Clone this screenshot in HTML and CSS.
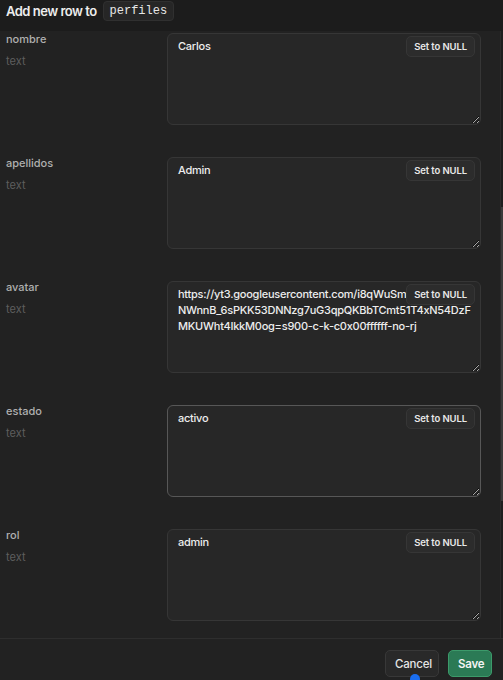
FILE: index.html
```html
<!DOCTYPE html>
<html lang="es">
<head>
<meta charset="utf-8">
<title>Add new row</title>
<link rel="stylesheet" href="styles.css">
</head>
<body>
<div class="panel">
  <header class="head">
    <span class="title">Add new row to</span>
    <code class="tbl">perfiles</code>
  </header>
  <main class="body">
    <div class="row">
      <div class="lab"><div class="name">nombre</div><div class="type">text</div></div>
      <div class="field"><textarea class="ta">Carlos</textarea><button class="null">Set to NULL</button></div>
    </div>
    <div class="row">
      <div class="lab"><div class="name">apellidos</div><div class="type">text</div></div>
      <div class="field"><textarea class="ta">Admin</textarea><button class="null">Set to NULL</button></div>
    </div>
    <div class="row">
      <div class="lab"><div class="name">avatar</div><div class="type">text</div></div>
      <div class="field"><textarea class="ta">https://yt3.googleusercontent.com/i8qWuSmo
NWnnB_6sPKK53DNNzg7uG3qpQKBbTCmt51T4xN54DzF
MKUWht4IkkM0og=s900-c-k-c0x00ffffff-no-rj</textarea><button class="null">Set to NULL</button></div>
    </div>
    <div class="row">
      <div class="lab"><div class="name">estado</div><div class="type">text</div></div>
      <div class="field"><textarea class="ta ta-hover">activo</textarea><button class="null">Set to NULL</button></div>
    </div>
    <div class="row">
      <div class="lab"><div class="name">rol</div><div class="type">text</div></div>
      <div class="field"><textarea class="ta">admin</textarea><button class="null">Set to NULL</button></div>
    </div>
  </main>
  <footer class="foot">
    <button class="btn cancel">Cancel</button>
    <button class="btn save">Save</button>
    <span class="dot"></span>
  </footer>
  <div class="sbar"><div class="thumb"></div></div>
</div>
</body>
</html>
```

FILE: styles.css
```css
* { box-sizing: border-box; }
html, body { margin: 0; padding: 0; }
body {
  background: #222222;
  font-family: "Inter", "Liberation Sans", sans-serif;
  color: #ededed;
  width: 503px;
  height: 680px;
  overflow: hidden;
}
.panel {
  position: relative;
  height: 680px;
  display: flex;
  flex-direction: column;
}
.head {
  height: 31px;
  background: #1c1c1c;
  display: flex;
  align-items: flex-start;
  gap: 6px;
  padding: 1px 6px 0;
}
.title {
  font-size: 13px;
  font-weight: 600;
  letter-spacing: -0.5px;
  line-height: 18px;
  padding-top: 1px;
}
.tbl {
  font-family: "Liberation Mono", monospace;
  font-size: 12px;
  color: #e6e6e6;
  background: #262626;
  border: 1px solid #303030;
  border-radius: 4px;
  padding: 1px 6px;
  line-height: 16px;
}
.body {
  height: 607px;
  padding-top: 2px;
  display: flex;
  flex-direction: column;
  gap: 32px;
}
.row {
  display: grid;
  grid-template-columns: 167px 314px;
}
.lab { padding: 0 0 0 6px; }
.name {
  font-size: 11px;
  font-weight: 500;
  color: #b0b0b0;
  line-height: 12px;
}
.type {
  font-size: 11px;
  color: #5e5e5e;
  margin-top: 9px;
  line-height: 14px;
}
.field { position: relative; }
.ta {
  display: block;
  width: 314px;
  height: 92px;
  margin: 0;
  background: #272727;
  border: 1px solid #363636;
  border-radius: 6px;
  color: #ededed;
  font-family: "Inter", "Liberation Sans", sans-serif;
  font-size: 11px;
  font-weight: 500;
  letter-spacing: -0.25px;
  line-height: 16px;
  padding: 4px 6px 5px 10px;
  resize: vertical;
  outline: none;
  color-scheme: dark;
  overflow: hidden;
  white-space: pre;
}
.ta-hover { border-color: #575757; }
.null {
  position: absolute;
  top: 3px;
  right: 6px;
  height: 21px;
  padding: 0 7px;
  background: #2c2c2c;
  border: 1px solid #363636;
  border-radius: 5px;
  color: #e8e8e8;
  font-family: "Inter", "Liberation Sans", sans-serif;
  font-size: 9.5px;
  font-weight: 600;
  letter-spacing: -0.1px;
}
.foot {
  position: relative;
  flex: 1;
  border-top: 1px solid #2e2e2e;
  display: flex;
  justify-content: flex-end;
  align-items: flex-start;
  gap: 9px;
  padding: 11px 11px 0 0;
}
.btn {
  height: 27px;
  border-radius: 5px;
  font-family: "Inter", "Liberation Sans", sans-serif;
  font-size: 11.5px;
  font-weight: 500;
  letter-spacing: -0.2px;
  padding: 0 9px;
}
.cancel {
  width: 54px;
  background: #292929;
  border: 1px solid #383838;
  color: #e6e6e6;
}
.save {
  width: 44px;
  background: #2b7a55;
  border: 1px solid #3c9a6a;
  color: #f4f4f4;
  font-weight: 600;
}
.dot {
  position: absolute;
  left: 410px;
  top: 35px;
  width: 10px;
  height: 10px;
  border-radius: 50%;
  background: #1a6ef0;
}
.sbar {
  position: absolute;
  top: 31px;
  right: 0;
  width: 3px;
  height: 607px;
  background: #1e1e1e;
  border-left: 1px solid #2a2a2a;
}
.thumb {
  margin-top: 176px;
  height: 294px;
  background: #3a3a3a;
}
```
